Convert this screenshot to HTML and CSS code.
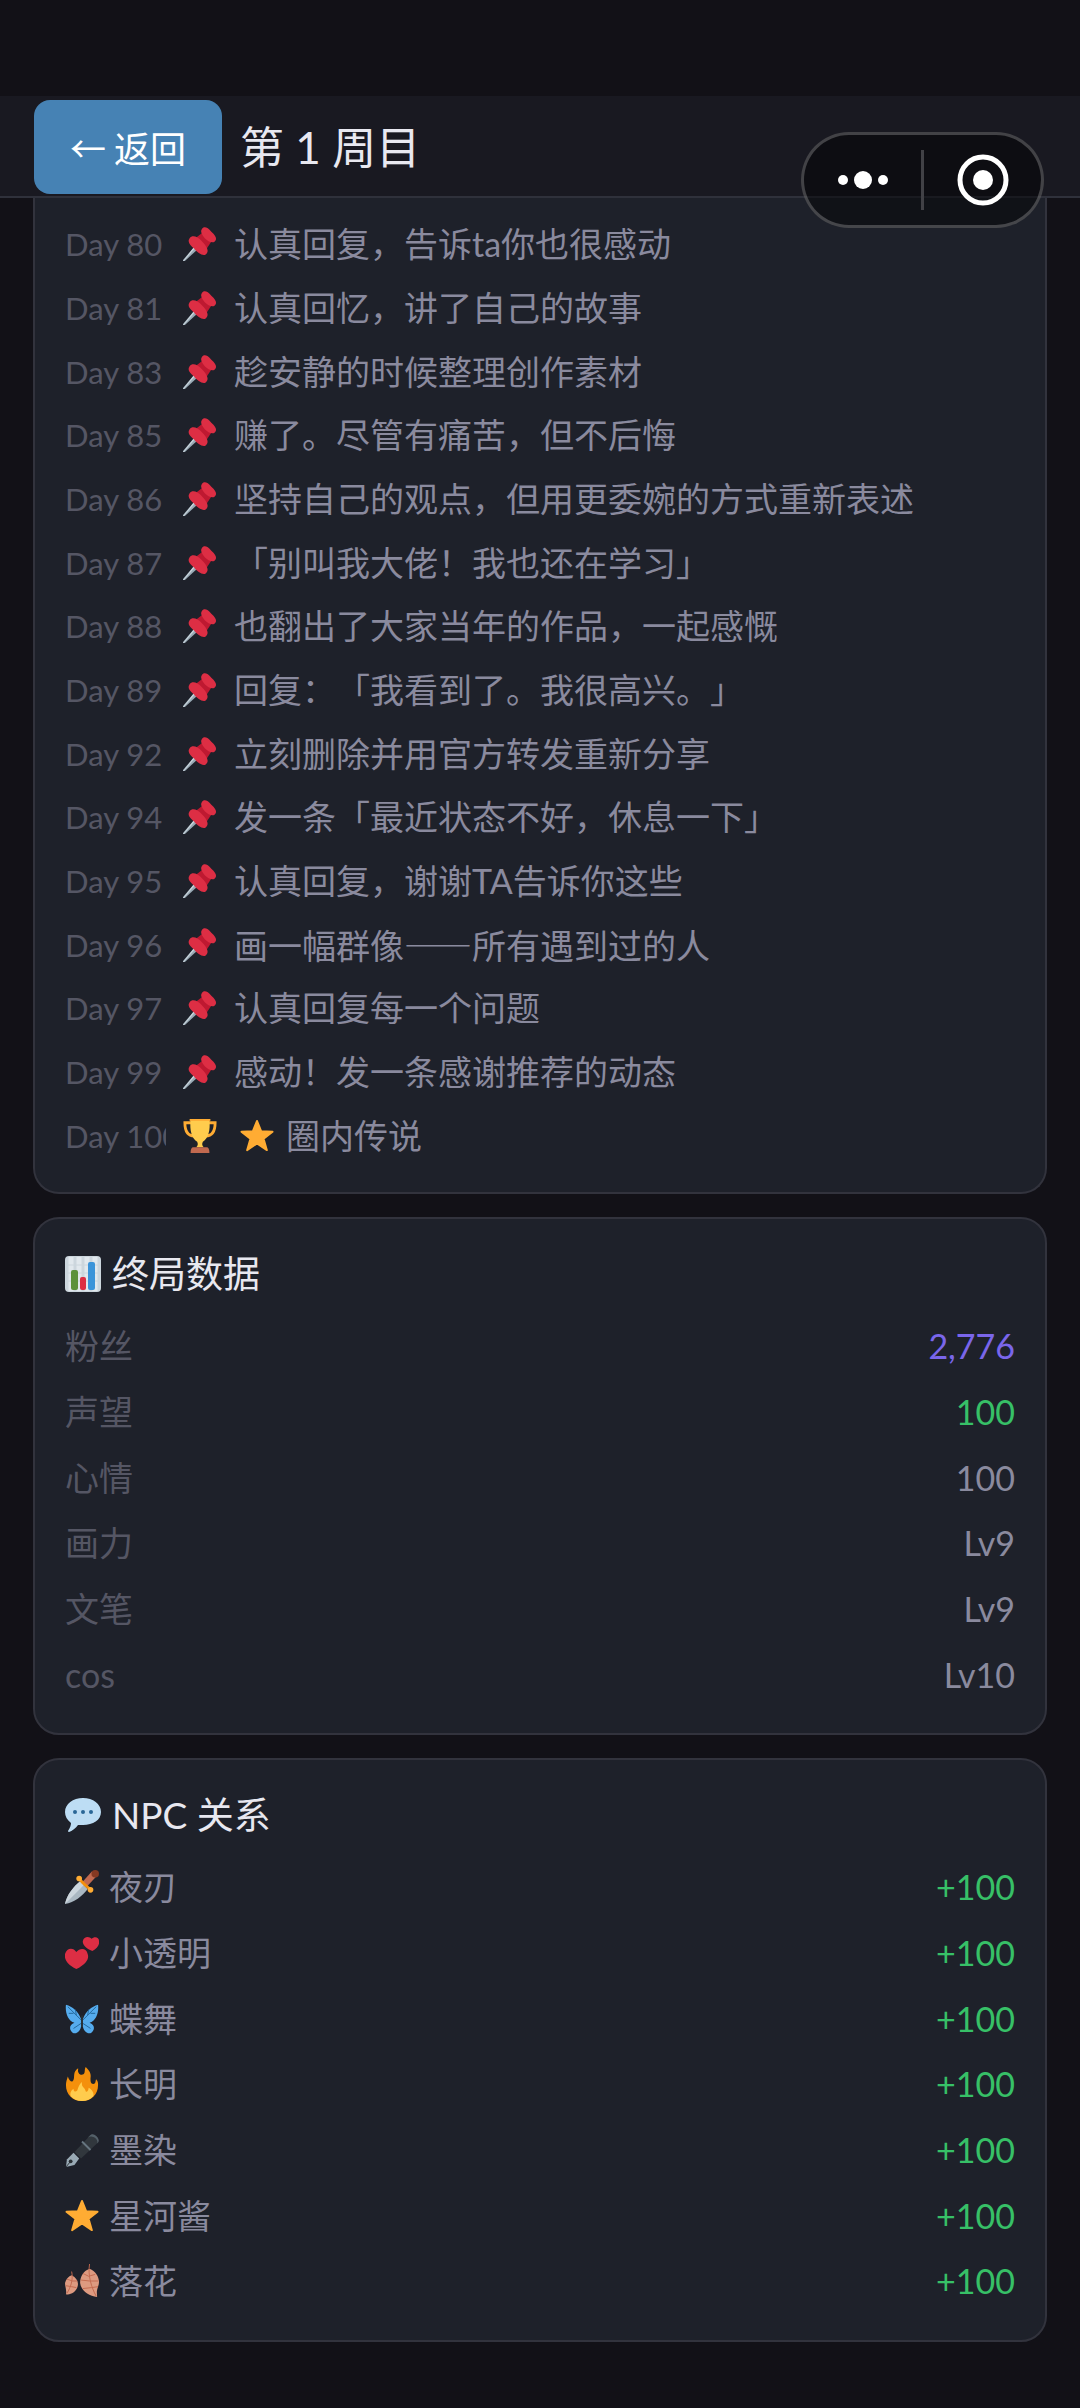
FILE: index.html
```html
<!DOCTYPE html>
<html lang="zh-CN">
<head>
    <meta charset="UTF-8">
    <meta name="viewport" content="width=device-width, initial-scale=1.0">
    <title>第 1 周目</title>
    <link rel="stylesheet" href="styles.css">
</head>
<body>
    <!-- 图标 -->
    <svg class="sprite" aria-hidden="true">
        <symbol id="pin" viewBox="0 0 36 36">
            <path fill="#99AAB5" d="M12 21 L15 24 L2 36 L0 36 L0 35 Z"/>
            <path fill="#CCD6DD" d="M12 21 L13 22 L1 36 L0 36 Z"/>
            <path fill="#BE1931" d="M13 12 L22 5 L31 14 L25 23 Z"/>
            <path fill="#DD2E44" d="M20 2 C22 -1 26 0 30 5 C36 10 36 14 33 16 C30 17 26 15 23 12 C20 8 18 5 20 2 Z"/>
            <path fill="#DD2E44" d="M7 12 C10 8 15 10 20 15 C26 21 28 26 24 29 C21 31 15 27 12 23 C8 20 4 16 7 12 Z"/>
        </symbol>
        <symbol id="trophy" viewBox="0 0 36 36">
            <path fill="none" stroke="#FFAC33" stroke-width="3" d="M9 4 H2 C2 12 4 18 12 18 M27 4 H34 C34 12 32 18 24 18"/>
            <path fill="#FFCC4D" d="M8 1 H28 C29 12 27 20 21 24 C20 26 20 28 22 30 H14 C16 28 16 26 15 24 C9 20 7 12 8 1 Z"/>
            <path fill="#FFAC33" d="M7 0 H29 V2 H7 Z"/>
            <path fill="#C1694F" d="M11 30 H25 Q28 30 28 36 H8 Q8 30 11 30 Z"/>
        </symbol>
        <symbol id="star" viewBox="0 0 36 36">
            <path fill="#FFAC33" stroke="#FFAC33" stroke-width="2" stroke-linejoin="round" d="M18 2 L22.500 13 L34.500 13.500 L25 21 L28.500 33 L18 26 L7.500 33 L11 21 L1.500 13.500 L13.500 13 Z"/>
        </symbol>
        <symbol id="chart" viewBox="0 0 36 36">
            <rect width="36" height="36" rx="4" fill="#CCD6DD"/>
            <path stroke="#E1E8ED" stroke-width="5" d="M6 1 V35 M14 1 V35 M22 1 V35 M30 1 V35"/>
            <path stroke="#CCD6DD" stroke-width="1" d="M1 9 H35 M1 17 H35 M1 25 H35"/>
            <rect x="6" y="14" width="7" height="20" rx="2" fill="#5C913B"/>
            <rect x="15" y="21" width="6" height="13" rx="2" fill="#DD2E44"/>
            <rect x="23" y="6" width="7" height="28" rx="2" fill="#3B94D9"/>
        </symbol>
        <symbol id="bubble" viewBox="0 0 36 36">
            <path fill="#BDDDF4" d="M18 1 C28 1 36 7 36 15 C36 23 28 28 18 28 C16 28 14 28 13 28 C11 31 7 34 4 35 C3 35 3 34 3 34 C5 31 6 28 6 26 C2 23 0 19 0 15 C0 7 8 1 18 1 Z"/>
            <circle cx="10" cy="15" r="2" fill="#2A6797"/><circle cx="18" cy="15" r="2" fill="#2A6797"/><circle cx="26" cy="15" r="2" fill="#2A6797"/>
        </symbol>
        <symbol id="dagger" viewBox="0 0 36 36">
            <path fill="#AAB8C2" d="M16 12 L24 20 C18 28 10 34 0 36 C2 26 9 18 16 12 Z"/>
            <path fill="#CCD6DD" d="M16 12 L20 16 L0 36 C2 26 9 18 16 12 Z"/>
            <path stroke="#C1694F" stroke-width="7" d="M20 16 L31 4"/>
            <circle cx="32" cy="4" r="4" fill="#853922"/>
            <path stroke="#F4900C" stroke-width="3" stroke-linecap="round" fill="none" d="M15 9 C17 12 24 19 28 21"/>
            <circle cx="15" cy="9" r="3" fill="#FFAC33"/><circle cx="27" cy="21" r="3" fill="#FFAC33"/>
        </symbol>
        <symbol id="hearts" viewBox="0 0 36 36">
            <path fill="#DD2E44" d="M12 35 C2 30 -1 24 0 19 C2 12 9 12 12 17 C16 12 23 13 24 19 C26 24 22 30 12 35 Z"/>
            <path fill="#DD2E44" d="M29 16 C21 13 18 8 19 5 C20 0 26 0 28 3 C31 0 36 1 36 5 C37 9 34 13 29 16 Z"/>
        </symbol>
        <symbol id="butterfly" viewBox="0 0 36 36">
            <path fill="#55ACEE" d="M17 18 C14 10 8 5 1 3 C0 11 3 20 10 22 C4 24 4 30 9 33 C15 34 17 28 18 22 C19 28 21 34 27 33 C32 30 32 24 26 22 C33 20 36 11 35 3 C28 5 22 10 19 18 Z"/>
            <path fill="none" stroke="#226699" stroke-width="1" d="M18 20 L3 5 M18 20 L33 5 M12 14 L11 8 M9 12 H4 M24 14 L25 8 M27 12 H32 M18 22 L9 28 M18 22 L27 28"/>
            <path stroke="#292F33" stroke-width="2" stroke-linecap="round" d="M18 15 V25"/>
        </symbol>
        <symbol id="fire" viewBox="0 0 36 36">
            <path fill="#F4900C" d="M35 19 C35 29 28 36 18 36 C8 36 1 29 1 19 C1 16 2 13 3 10 C4 14 7 16 8 15 C11 13 8 7 12 3 C13 2 14 1 14 2 C13 5 15 9 19 8 C22 7 20 3 22 0 C26 4 28 7 27 12 C27 15 27 18 30 18 C33 18 32 14 33 13 C35 15 35 17 35 19 Z"/>
            <path fill="#FFCC4D" d="M18 36 C13 36 9 34 6 31 C5 28 6 25 9 23 C9 26 11 27 13 25 C14 22 15 18 18 16 C17 22 21 21 22 26 C24 27 25 24 25 22 C29 24 31 28 30 31 C27 34 23 36 18 36 Z"/>
        </symbol>
        <symbol id="pen" viewBox="0 0 36 36">
            <path fill="#31373D" d="M10 20 L27 2 C30 -1 38 6 35 10 L17 27 Z"/>
            <path fill="#546069" d="M24 5 L27 2 C30 -1 38 6 35 10 L34 11 C36 7 29 1 24 5 Z"/>
            <path stroke="#66757F" stroke-width="2" d="M18 9 L27 18"/>
            <path fill="#99AAB5" d="M9 21 L15 27 L10 34 L1 36 L2 28 Z"/>
            <path stroke="#292F33" stroke-width="1" d="M1 36 L6 30"/><circle cx="6" cy="30" r="2" fill="#292F33"/>
        </symbol>
        <symbol id="leaves" viewBox="0 0 36 36">
            <path fill="#DD9A80" d="M26 5 C34 8 38 17 35 24 C33 29 34 32 34 35 C25 34 17 28 16 20 C16 13 20 7 26 5 Z"/>
            <path fill="#DD9A80" d="M7 12 C13 15 15 20 13 25 C11 30 6 33 1 32 C2 28 0 24 0 20 C1 16 4 13 7 12 Z"/>
            <path fill="none" stroke="#C1694F" stroke-width="1" d="M26 0 C24 12 28 25 33 34 M25 13 L19 10 M26 18 L17 17 M28 25 L19 26 M25 13 L32 11 M26 18 L35 18 M28 25 L35 24 M7 8 C9 16 6 25 2 31 M8 18 L2 16 M8 18 L13 18 M7 24 L1 23 M7 24 L12 25"/>
        </symbol>
    </svg>

    <header class="topbar">
        <button class="back-btn" type="button">← 返回</button>
        <h1>第 1 周目</h1>
    </header>

    <div class="capsule">
        <button type="button" aria-label="更多">
            <svg width="52" height="20" viewBox="0 0 52 20"><circle cx="6" cy="10" r="5"/><circle cx="26" cy="10" r="9"/><circle cx="46" cy="10" r="5"/></svg>
        </button>
        <span class="capsule-line"></span>
        <button type="button" aria-label="关闭">
            <svg width="52" height="52" viewBox="0 0 52 52"><circle class="ring" cx="26" cy="26" r="23"/><circle cx="26" cy="26" r="10"/></svg>
        </button>
    </div>

    <main>
        <section class="card card-log">
            <ul class="log">
                <li><span class="day">Day 80</span><svg class="icon"><use href="#pin"/></svg><span>认真回复，告诉ta你也很感动</span></li>
                <li><span class="day">Day 81</span><svg class="icon"><use href="#pin"/></svg><span>认真回忆，讲了自己的故事</span></li>
                <li><span class="day">Day 83</span><svg class="icon"><use href="#pin"/></svg><span>趁安静的时候整理创作素材</span></li>
                <li><span class="day">Day 85</span><svg class="icon"><use href="#pin"/></svg><span>赚了。尽管有痛苦，但不后悔</span></li>
                <li><span class="day">Day 86</span><svg class="icon"><use href="#pin"/></svg><span>坚持自己的观点，但用更委婉的方式重新表述</span></li>
                <li><span class="day">Day 87</span><svg class="icon"><use href="#pin"/></svg><span>「别叫我大佬！我也还在学习」</span></li>
                <li><span class="day">Day 88</span><svg class="icon"><use href="#pin"/></svg><span>也翻出了大家当年的作品，一起感慨</span></li>
                <li><span class="day">Day 89</span><svg class="icon"><use href="#pin"/></svg><span>回复：「我看到了。我很高兴。」</span></li>
                <li><span class="day">Day 92</span><svg class="icon"><use href="#pin"/></svg><span>立刻删除并用官方转发重新分享</span></li>
                <li><span class="day">Day 94</span><svg class="icon"><use href="#pin"/></svg><span>发一条「最近状态不好，休息一下」</span></li>
                <li><span class="day">Day 95</span><svg class="icon"><use href="#pin"/></svg><span>认真回复，谢谢TA告诉你这些</span></li>
                <li><span class="day">Day 96</span><svg class="icon"><use href="#pin"/></svg><span class="cjk">画一幅群像——所有遇到过的人</span></li>
                <li><span class="day">Day 97</span><svg class="icon"><use href="#pin"/></svg><span>认真回复每一个问题</span></li>
                <li><span class="day">Day 99</span><svg class="icon"><use href="#pin"/></svg><span>感动！发一条感谢推荐的动态</span></li>
                <li><span class="day">Day 100</span><svg class="icon"><use href="#trophy"/></svg><span class="ending"><svg class="icon"><use href="#star"/></svg>圈内传说</span></li>
            </ul>
        </section>

        <section class="card">
            <h2><svg class="icon"><use href="#chart"/></svg>终局数据</h2>
            <dl class="stats">
                <div><dt>粉丝</dt><dd class="purple">2,776</dd></div>
                <div><dt>声望</dt><dd class="green">100</dd></div>
                <div><dt>心情</dt><dd>100</dd></div>
                <div><dt>画力</dt><dd>Lv9</dd></div>
                <div><dt>文笔</dt><dd>Lv9</dd></div>
                <div><dt>cos</dt><dd>Lv10</dd></div>
            </dl>
        </section>

        <section class="card">
            <h2><svg class="icon"><use href="#bubble"/></svg>NPC 关系</h2>
            <dl class="stats npc">
                <div><dt><svg class="icon"><use href="#dagger"/></svg>夜刃</dt><dd class="green">+100</dd></div>
                <div><dt><svg class="icon"><use href="#hearts"/></svg>小透明</dt><dd class="green">+100</dd></div>
                <div><dt><svg class="icon"><use href="#butterfly"/></svg>蝶舞</dt><dd class="green">+100</dd></div>
                <div><dt><svg class="icon"><use href="#fire"/></svg>长明</dt><dd class="green">+100</dd></div>
                <div><dt><svg class="icon"><use href="#pen"/></svg>墨染</dt><dd class="green">+100</dd></div>
                <div><dt><svg class="icon"><use href="#star"/></svg>星河酱</dt><dd class="green">+100</dd></div>
                <div><dt><svg class="icon"><use href="#leaves"/></svg>落花</dt><dd class="green">+100</dd></div>
            </dl>
        </section>
    </main>
</body>
</html>
```
FILE: styles.css
```css
* {
    box-sizing: border-box;
    margin: 0;
    padding: 0;
}
body {
    background: #121117;
    color: #8a8a9e;
    font-family: Lato, "Noto Sans CJK SC", sans-serif;
    font-size: 34px;
    line-height: 50px;
    padding-top: 96px;
    text-spacing-trim: space-all;
}
.sprite {
    position: absolute;
    width: 0;
    height: 0;
}
.icon {
    width: 34px;
    height: 34px;
    flex-shrink: 0;
}
.topbar {
    display: flex;
    align-items: center;
    gap: 18px;
    padding: 4px 34px 2px;
    background: #191921;
    border-bottom: 2px solid #2f313b;
}
.back-btn {
    height: 94px;
    padding: 0 36px;
    border: none;
    border-radius: 16px;
    background: #4682b4;
    color: #fff;
    font-family: "Noto Sans CJK SC", sans-serif;
    font-size: 36px;
    line-height: 50px;
    cursor: pointer;
}
h1 {
    color: #e8e8f0;
    font-size: 44px;
    font-weight: 400;
}
/* 右上角胶囊按钮 */
.capsule {
    position: absolute;
    top: 132px;
    right: 36px;
    display: flex;
    align-items: center;
    width: 243px;
    height: 96px;
    border: 3px solid rgba(255, 255, 255, 0.22);
    border-radius: 48px;
    background: rgba(0, 0, 0, 0.45);
}
.capsule button {
    flex: 1;
    height: 100%;
    display: flex;
    align-items: center;
    justify-content: center;
    border: none;
    background: none;
    cursor: pointer;
}
.capsule svg {
    fill: #fff;
}
.capsule .ring {
    fill: none;
    stroke: #fff;
    stroke-width: 5;
}
.capsule-line {
    width: 3px;
    height: 60px;
    background: #414146;
}
main {
    display: flex;
    flex-direction: column;
    gap: 23px;
    padding: 0 33px 66px;
}
.card {
    padding: 30px 30px 26px;
    background: #1e212a;
    border: 2px solid #32333d;
    border-radius: 26px;
}
.card-log {
    padding: 14px 30px 25px;
    border-top: none;
    border-radius: 0 0 26px 26px;
}
.log {
    display: grid;
    grid-auto-rows: 64px 64px 63px;
    list-style: none;
}
.log li {
    display: flex;
    align-items: center;
    gap: 17px;
    white-space: nowrap;
}
.day {
    width: 101px;
    flex-shrink: 0;
    overflow: hidden;
    color: #555664;
    font-size: 31px;
}
.cjk {
    font-family: "Noto Sans CJK SC", sans-serif;
}
.ending {
    display: flex;
    align-items: center;
    gap: 12px;
    padding-left: 6px;
}
h2 {
    display: flex;
    align-items: center;
    gap: 11px;
    margin-bottom: 14px;
    color: #e8e8f0;
    font-size: 37px;
    font-weight: 400;
}
h2 .icon {
    width: 36px;
    height: 36px;
}
.stats {
    display: grid;
    grid-auto-rows: 66px 66px 65px;
}
.stats div {
    display: flex;
    align-items: center;
    justify-content: space-between;
}
.stats dt {
    display: flex;
    align-items: center;
    gap: 10px;
    color: #555664;
}
.npc dt {
    color: #8a8a9e;
}
.stats .purple {
    color: #7a66ea;
}
.stats .green {
    color: #37c067;
}
```
